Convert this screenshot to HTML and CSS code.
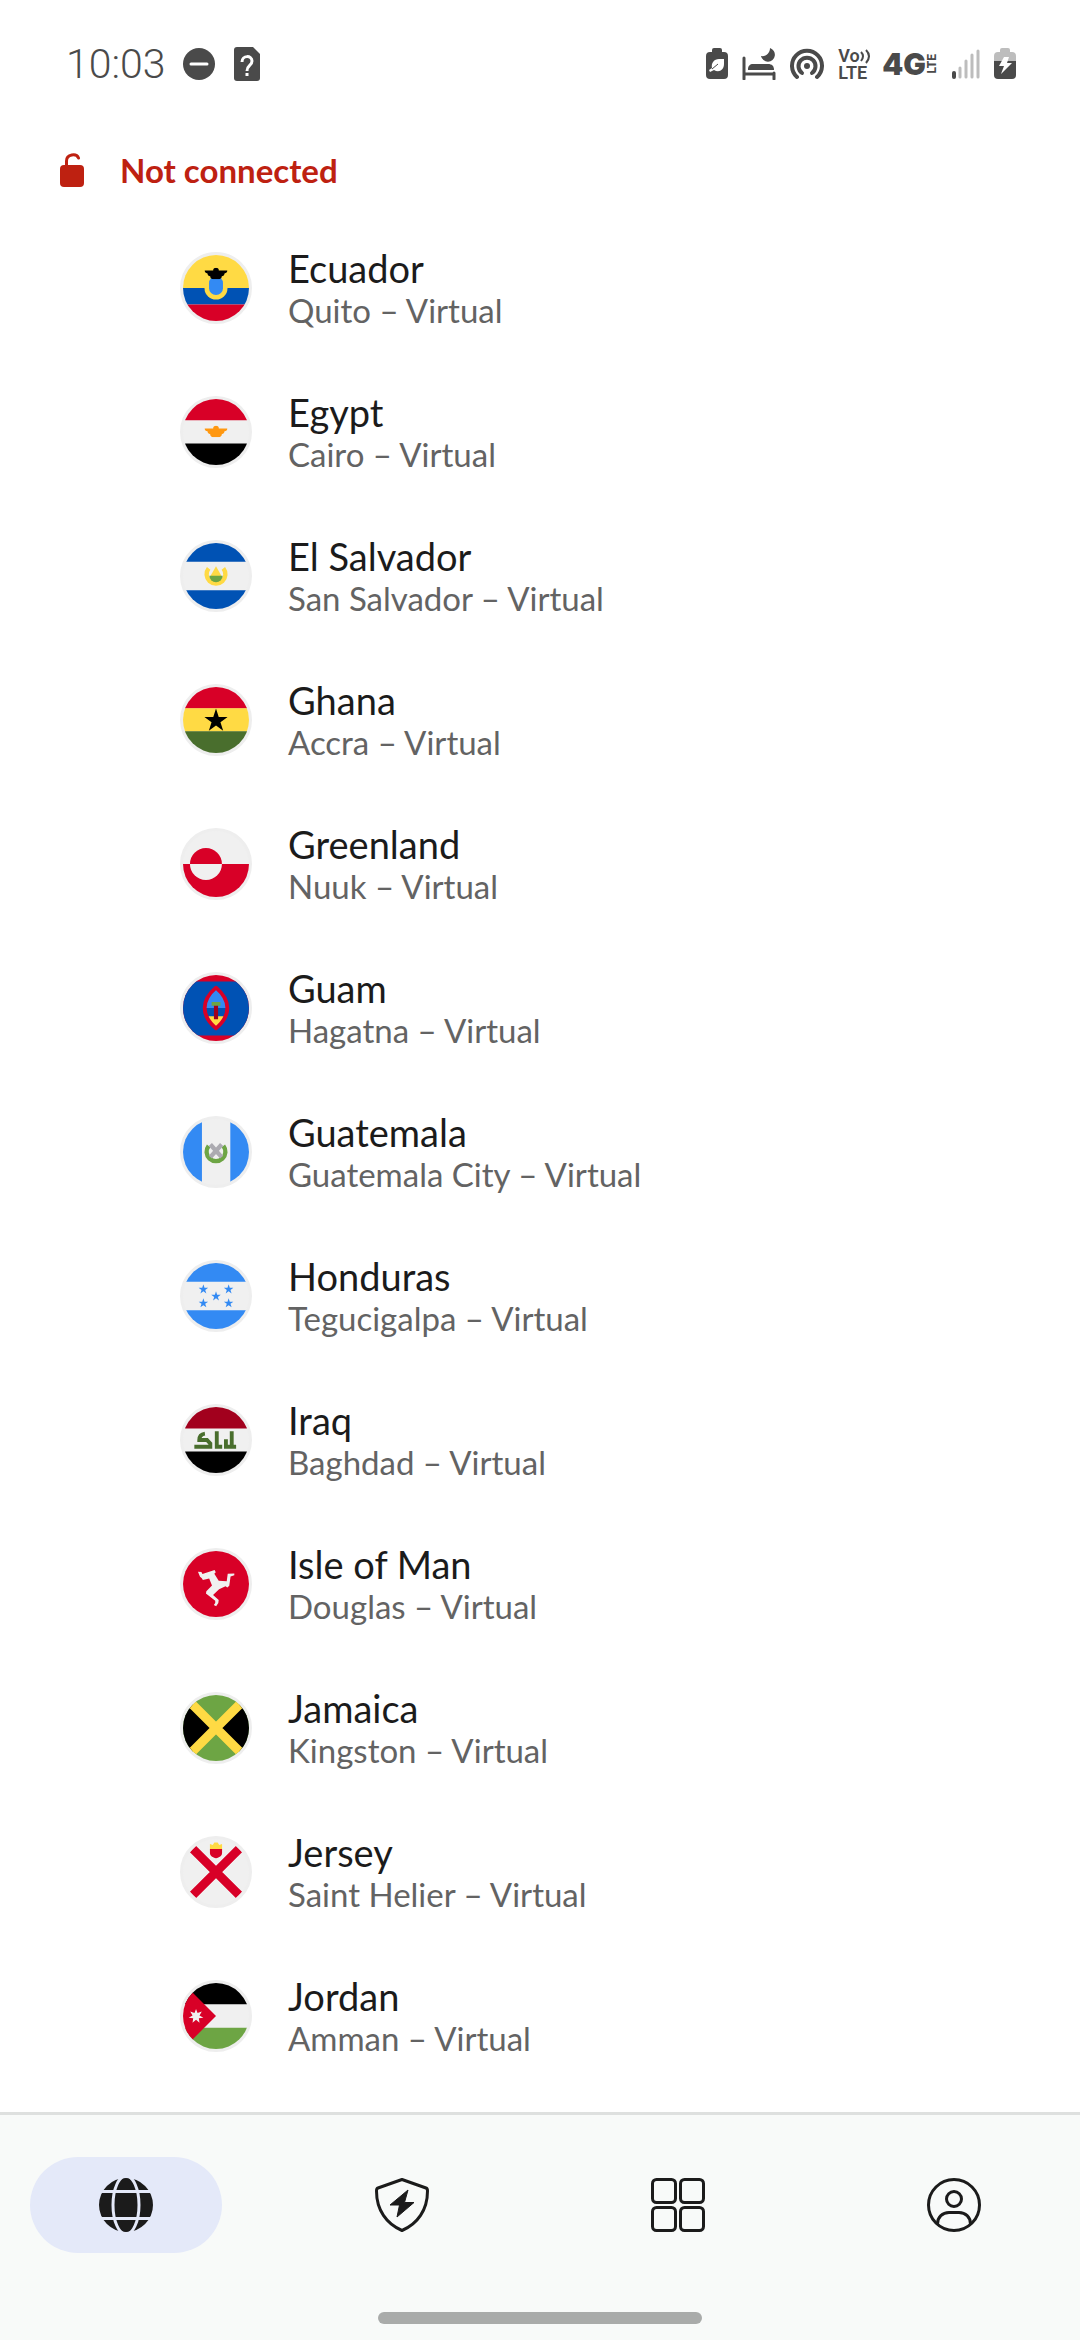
FILE: index.html
```html
<!DOCTYPE html>
<html lang="en">
<head>
    <meta charset="UTF-8">
    <meta name="viewport" content="width=device-width, initial-scale=1.0">
    <title>Countries</title>
    <link rel="stylesheet" href="styles.css">
</head>
<body>

<!-- shared shapes for the flags -->
<svg class="sprite" aria-hidden="true">
    <symbol id="star" viewBox="0 0 100 100">
        <polygon points="50,2 61.5,37.5 99,37.5 68.8,59.3 80.3,95 50,73 19.7,95 31.2,59.3 1,37.5 38.5,37.5"/>
    </symbol>
    <symbol id="eagle" viewBox="0 0 180 90">
        <path d="M179 23h-67a22 22 0 0 0-44 0H1c0 12 11 22 23 22 0 12 9 22 21 22 0 13 10 23 23 23h44c13 0 23-10 23-23 12 0 21-10 21-22 12 0 23-10 23-22z"/>
    </symbol>
</svg>

<header class="status-bar">
    <span class="clock">10:03</span>
    <svg class="icon-dnd" width="32" height="32" viewBox="0 0 32 32">
        <circle cx="16" cy="16" r="16"/>
        <path d="M8 16h16" stroke="#fff" stroke-width="3" stroke-linecap="round"/>
    </svg>
    <svg class="icon-sim" width="26" height="34" viewBox="0 0 26 34">
        <path d="M3 0h16l7 7v24a3 3 0 0 1-3 3H3a3 3 0 0 1-3-3V3a3 3 0 0 1 3-3z"/>
        <path d="M8 15c0-7 10-7 10-1 0 5-5 4-5 10" fill="none" stroke="#fff" stroke-width="3"/>
        <path d="M11.500 26h3v3h-3z" fill="#fff"/>
    </svg>

    <div class="status-icons">
        <svg width="22" height="32" viewBox="0 0 22 32">
            <path d="M8 0h6a2 2 0 0 1 2 2v2h2a4 4 0 0 1 4 4v19a4 4 0 0 1-4 4H4a4 4 0 0 1-4-4V8a4 4 0 0 1 4-4h2V2a2 2 0 0 1 2-2z"/>
            <path d="M18 11v5c0 6-5 9-10 6l-4 2-1-2 3-2c-1-5 2-9 7-9z" fill="#fff"/>
            <path d="M6 21l6-5" stroke="#4a4a4a" stroke-width="1"/>
        </svg>
        <svg width="34" height="32" viewBox="0 0 34 32">
            <path d="M2 10v21M2 26h30M32 31v-6" fill="none" stroke="#4a4a4a" stroke-width="3" stroke-linecap="round"/>
            <path d="M6 22v-1c0-3 2-5 5-5h15c4 0 6 2 6 6z"/>
            <path d="M28 0a7 7 0 1 1-9 8c5 1 9-3 9-8z"/>
        </svg>
        <svg width="34" height="32" viewBox="0 0 34 32">
            <circle cx="17" cy="18" r="3"/>
            <path d="M7 29A15 15 0 1 1 27 29" fill="none" stroke="#4a4a4a" stroke-width="4" stroke-linecap="round"/>
            <path d="M12 25A8.500 8.500 0 1 1 22 25" fill="none" stroke="#4a4a4a" stroke-width="4" stroke-linecap="round"/>
        </svg>
        <div class="volte">
            <span class="volte-top">Vo
                <svg width="11" height="16" viewBox="0 0 11 16">
                    <path d="M1 4q4 4 0 9M6 2q6 6 0 13" fill="none" stroke="#4a4a4a" stroke-width="2"/>
                </svg>
            </span>
            <span>LTE</span>
        </div>
        <div class="network">
            <span class="network-type">4G</span>
            <span class="network-lte">LTE</span>
        </div>
        <svg width="28" height="32" viewBox="0 0 28 32">
            <path d="M8 29v-9M14 29V13M20 29V7M26 29V3" stroke="#bdbdbd" stroke-width="3" stroke-linecap="round"/>
            <path d="M2 29v-4" stroke="#4a4a4a" stroke-width="4" stroke-linecap="round"/>
        </svg>
        <svg width="22" height="32" viewBox="0 0 22 32">
            <path d="M8 0h6a2 2 0 0 1 2 2v2h2a4 4 0 0 1 4 4v5H0V8a4 4 0 0 1 4-4h2V2a2 2 0 0 1 2-2z" fill="#bdbdbd"/>
            <path d="M0 13h22v14a4 4 0 0 1-4 4H4a4 4 0 0 1-4-4z"/>
            <path d="M10 9l-5 9h5l-3 8 11-11h-5l2-6z" fill="#fff"/>
        </svg>
    </div>
</header>

<div class="connection">
    <svg width="24" height="34" viewBox="0 0 24 34">
        <rect y="12" width="24" height="22" rx="4"/>
        <path d="M6.500 13V8c0-7 10-8 12-3" fill="none" stroke="#be2111" stroke-width="3" stroke-linecap="round"/>
    </svg>
    <span>Not connected</span>
</div>

<main>
    <ul class="country-list">
        <li>
            <button class="country" type="button">
                <svg class="flag" viewBox="0 0 512 512">
                    <path fill="#ffda44" d="M0 0h512v256H0z"/>
                    <path fill="#0052b4" d="M0 256h512v128H0z"/>
                    <path fill="#d80027" d="M0 384h512v128H0z"/>
                    <path fill="#ffda44" d="M167 220h178v37a89 89 0 0 1-178 0z"/>
                    <rect fill="#338af3" x="202" y="165" width="108" height="146" rx="54"/>
                    <use href="#eagle" x="166" y="98" width="180" height="90" fill="#000"/>
                </svg>
                <span class="country-text">
                    <span class="name">Ecuador</span>
                    <span class="city">Quito – Virtual</span>
                </span>
            </button>
        </li>
        <li>
            <button class="country" type="button">
                <svg class="flag" viewBox="0 0 512 512">
                    <path fill="#d80027" d="M0 0h512v165H0z"/>
                    <path fill="#000" d="M0 345h512v167H0z"/>
                    <use href="#eagle" x="166" y="206" width="180" height="90" fill="#ff9811"/>
                </svg>
                <span class="country-text">
                    <span class="name">Egypt</span>
                    <span class="city">Cairo – Virtual</span>
                </span>
            </button>
        </li>
        <li>
            <button class="country" type="button">
                <svg class="flag" viewBox="0 0 512 512">
                    <path fill="#0052b4" d="M0 0h512v145H0zM0 367h512v145H0z"/>
                    <path fill="none" stroke="#ffda44" stroke-width="34" d="M199 196a73 73 0 1 0 114 0"/>
                    <path fill="#ffda44" d="M256 180l43 76h-86z"/>
                    <path fill="#6da544" d="M204 254h104a52 50 0 0 1-104 0z"/>
                </svg>
                <span class="country-text">
                    <span class="name">El Salvador</span>
                    <span class="city">San Salvador – Virtual</span>
                </span>
            </button>
        </li>
        <li>
            <button class="country" type="button">
                <svg class="flag" viewBox="0 0 512 512">
                    <path fill="#d80027" d="M0 0h512v167H0z"/>
                    <path fill="#ffda44" d="M0 165h512v180H0z"/>
                    <path fill="#496e2d" d="M0 343h512v169H0z"/>
                    <use href="#star" x="164" y="164" width="184" height="184"/>
                </svg>
                <span class="country-text">
                    <span class="name">Ghana</span>
                    <span class="city">Accra – Virtual</span>
                </span>
            </button>
        </li>
        <li>
            <button class="country" type="button">
                <svg class="flag" viewBox="0 0 512 512">
                    <path fill="#d80027" d="M0 256h512v256H0z"/>
                    <path fill="#d80027" d="M54 256a124 124 0 0 1 248 0z"/>
                    <path fill="#f0f0f0" d="M54 256a124 124 0 0 0 248 0z"/>
                </svg>
                <span class="country-text">
                    <span class="name">Greenland</span>
                    <span class="city">Nuuk – Virtual</span>
                </span>
            </button>
        </li>
        <li>
            <button class="country" type="button">
                <svg class="flag" viewBox="0 0 512 512">
                    <path fill="#d80027" d="M0 0h512v512H0z"/>
                    <path fill="#0052b4" d="M0 50h512v420H0z"/>
                    <path fill="#338af3" d="M166 256q10-90 90-152 80 62 90 152z"/>
                    <path fill="#ffda44" d="M186 320h140q-25 60-70 92-45-32-70-92z"/>
                    <path fill="#a2001d" d="M240 230h32v114h-32z"/>
                    <path fill="#6da544" d="M222 210h68v28h-68z"/>
                    <path fill="none" stroke="#d80027" stroke-width="30" stroke-linejoin="round" d="M256 98c54 46 88 100 88 158s-34 112-88 158c-54-46-88-100-88-158s34-112 88-158z"/>
                </svg>
                <span class="country-text">
                    <span class="name">Guam</span>
                    <span class="city">Hagatna – Virtual</span>
                </span>
            </button>
        </li>
        <li>
            <button class="country" type="button">
                <svg class="flag" viewBox="0 0 512 512">
                    <path fill="#338af3" d="M0 0h147v512H0zM367 0h145v512H367z"/>
                    <path fill="none" stroke="#6da544" stroke-width="34" d="M199 208a73 73 0 1 0 114 0"/>
                    <path stroke="#acabb1" stroke-width="34" d="M212 198l88 98M300 198l-88 98"/>
                </svg>
                <span class="country-text">
                    <span class="name">Guatemala</span>
                    <span class="city">Guatemala City – Virtual</span>
                </span>
            </button>
        </li>
        <li>
            <button class="country" type="button">
                <svg class="flag" viewBox="0 0 512 512">
                    <path fill="#338af3" d="M0 0h512v145H0zM0 367h512v145H0z"/>
                    <g fill="#338af3">
                        <use href="#star" x="120" y="164" width="76" height="76"/>
                        <use href="#star" x="316" y="164" width="76" height="76"/>
                        <use href="#star" x="218" y="218" width="76" height="76"/>
                        <use href="#star" x="120" y="272" width="76" height="76"/>
                        <use href="#star" x="316" y="272" width="76" height="76"/>
                    </g>
                </svg>
                <span class="country-text">
                    <span class="name">Honduras</span>
                    <span class="city">Tegucigalpa – Virtual</span>
                </span>
            </button>
        </li>
        <li>
            <button class="country" type="button">
                <svg class="flag" viewBox="0 0 512 512">
                    <path fill="#a2001d" d="M0 0h512v167H0z"/>
                    <path fill="#000" d="M0 345h512v167H0z"/>
                    <g fill="none" stroke="#496e2d" stroke-width="30">
                        <path d="M88 308h124v-24l-26-28h-60c0-28 14-46 44-50"/>
                        <path d="M262 188v120h42"/>
                        <path d="M318 308h94M378 188v120M333 250v58"/>
                    </g>
                </svg>
                <span class="country-text">
                    <span class="name">Iraq</span>
                    <span class="city">Baghdad – Virtual</span>
                </span>
            </button>
        </li>
        <li>
            <button class="country" type="button">
                <svg class="flag" viewBox="0 0 512 512">
                    <path fill="#d80027" d="M0 0h512v512H0z"/>
                    <path fill="#f0f0f0" d="M116 160l27 2 8 16 94-31 9 18-11 11 34 54 62 5 8-59 51-2v14l-29 10-10 72-15 13-14-10-50 23-47 46 44 38-3 24-17 24-18-9 11-16v-17l-72-56 3-18 44-45-22-53-49 11-8-13-14-12z"/>
                </svg>
                <span class="country-text">
                    <span class="name">Isle of Man</span>
                    <span class="city">Douglas – Virtual</span>
                </span>
            </button>
        </li>
        <li>
            <button class="country" type="button">
                <svg class="flag" viewBox="0 0 512 512">
                    <path fill="#6da544" d="M0 0h512v512H0z"/>
                    <path fill="#000" d="M0 0l256 256L0 512zM512 0L256 256l256 256z"/>
                    <path stroke="#ffda44" stroke-width="70" d="M0 0l512 512M512 0L0 512"/>
                </svg>
                <span class="country-text">
                    <span class="name">Jamaica</span>
                    <span class="city">Kingston – Virtual</span>
                </span>
            </button>
        </li>
        <li>
            <button class="country" type="button">
                <svg class="flag" viewBox="0 0 512 512">
                    <path stroke="#d80027" stroke-width="68" d="M78 78l356 356M434 78L78 434"/>
                    <path fill="#ffda44" d="M209 38l22 8 12-18h26l12 18 22-8v48h-94z"/>
                    <path fill="#d80027" d="M209 78h94v28c0 26-22 37-47 43-25-6-47-17-47-43z"/>
                </svg>
                <span class="country-text">
                    <span class="name">Jersey</span>
                    <span class="city">Saint Helier – Virtual</span>
                </span>
            </button>
        </li>
        <li>
            <button class="country" type="button">
                <svg class="flag" viewBox="0 0 512 512">
                    <path fill="#000" d="M0 0h512v165H0z"/>
                    <path fill="#6da544" d="M0 347h512v165H0z"/>
                    <path fill="#d80027" d="M0 0l256 256L0 512z"/>
                    <path fill="#f0f0f0" d="M101 201l12 32 33-11-18 30 30 18-35 4 5 35-27-24-27 24 5-35-35-4 30-18-18-30 33 11z"/>
                </svg>
                <span class="country-text">
                    <span class="name">Jordan</span>
                    <span class="city">Amman – Virtual</span>
                </span>
            </button>
        </li>
    </ul>
</main>

<footer class="bottom">
    <nav class="tabs">
        <a class="tab active" href="#countries" aria-label="Countries">
            <svg width="54" height="54" viewBox="0 0 54 54">
                <circle cx="27" cy="27" r="27" fill="#1b1b1b"/>
                <g fill="none" stroke="#e4e9f9" stroke-width="3">
                    <ellipse cx="27" cy="27" rx="13" ry="29"/>
                    <path d="M0 13.500h54M0 40.500h54"/>
                </g>
            </svg>
        </a>
        <a class="tab" href="#protection" aria-label="Protection">
            <svg width="54" height="54" viewBox="0 0 54 54">
                <path d="M27 1.500L51 10q1.500.500 1.500 3c0 19-10 33-25.500 39.500C11.500 46 1.500 32 1.500 13q0-2.500 1.500-3z" fill="none" stroke="#1b1b1b" stroke-width="3" stroke-linejoin="round"/>
                <path d="M33 12l-3.500 12.500H39L22 39l2.500-12H15z" fill="#1b1b1b" stroke="#1b1b1b" stroke-linejoin="round"/>
            </svg>
        </a>
        <a class="tab" href="#products" aria-label="Products">
            <svg width="54" height="54" viewBox="0 0 54 54" fill="none" stroke="#1b1b1b" stroke-width="3">
                <rect x="1.500" y="1.500" width="23" height="23" rx="4"/>
                <rect x="29.500" y="1.500" width="23" height="23" rx="4"/>
                <rect x="1.500" y="29.500" width="23" height="23" rx="4"/>
                <rect x="29.500" y="29.500" width="23" height="23" rx="4"/>
            </svg>
        </a>
        <a class="tab" href="#profile" aria-label="Profile">
            <svg width="54" height="54" viewBox="0 0 54 54" fill="none" stroke="#1b1b1b" stroke-width="3">
                <circle cx="27" cy="27" r="25.500"/>
                <circle cx="27" cy="21" r="7.500"/>
                <path d="M10.500 46c0-7 5-11.500 11.500-11.500h10c6.500 0 11.500 4.500 11.500 11.500"/>
            </svg>
        </a>
    </nav>
    <div class="home-indicator"></div>
</footer>

</body>
</html>
```

FILE: styles.css
```css
* {
    box-sizing: border-box;
}

body {
    display: flex;
    flex-direction: column;
    min-height: 100vh;
    margin: 0;
    background-color: #fff;
    font-family: Lato, sans-serif;
    color: #1b1b1b;
}

svg {
    display: block;
    flex-shrink: 0;
}

.sprite {
    position: absolute;
    width: 0;
    height: 0;
}

/* Status bar */
.status-bar {
    display: flex;
    align-items: center;
    height: 128px;
    padding: 0 64px 0 66px;
    color: #4a4a4a;
    fill: #4a4a4a;
}

.clock {
    font-family: Roboto, sans-serif;
    font-size: 41px;
    font-weight: 300;
}

.icon-dnd {
    margin-left: 17px;
}

.icon-sim {
    margin-left: 19px;
}

.status-icons {
    display: flex;
    align-items: center;
    gap: 14px;
    margin-left: auto;
}

.volte {
    display: flex;
    flex-direction: column;
    width: 30px;
    font-family: Roboto, sans-serif;
    font-size: 18px;
    font-weight: 600;
    line-height: 17px;
}

.volte-top {
    display: flex;
    align-items: center;
}

.network {
    display: flex;
    align-items: center;
    font-weight: 800;
    line-height: 32px;
}

.network-type {
    font-family: Inter, sans-serif;
    font-size: 30px;
    font-weight: 900;
}

.network-lte {
    font-family: Roboto, sans-serif;
    font-size: 12px;
    line-height: 12px;
    writing-mode: vertical-rl;
    transform: rotate(180deg);
}

/* Connection state */
.connection {
    display: flex;
    align-items: center;
    gap: 36px;
    height: 88px;
    padding: 0 60px 4px;
    font-size: 33px;
    font-weight: 700;
    color: #be2111;
    fill: #be2111;
}

/* Country list */
.country-list {
    margin: 0;
    padding: 0 0 24px;
    list-style: none;
}

.country {
    display: flex;
    align-items: center;
    gap: 36px;
    width: 100%;
    height: 144px;
    padding: 0 48px 0 180px;
    border: none;
    background: none;
    font-family: inherit;
    text-align: left;
    color: inherit;
    cursor: pointer;
}

.flag {
    width: 72px;
    height: 72px;
    border: 3px solid #eee;
    border-radius: 50%;
    background-color: #f0f0f0;
}

.country-text {
    display: flex;
    flex-direction: column;
    padding-top: 2px;
    line-height: 42px;
}

.name {
    font-size: 38px;
}

.city {
    font-size: 33px;
    color: #636363;
}

/* Bottom navigation */
.bottom {
    margin-top: auto;
    padding: 42px 30px 16px;
    border-top: 3px solid #dee0df;
    background-color: #f8faf9;
}

.tabs {
    display: flex;
    justify-content: space-between;
}

.tab {
    display: flex;
    align-items: center;
    justify-content: center;
    width: 192px;
    height: 96px;
    border-radius: 48px;
}

.tab.active {
    background-color: #e4e9f9;
}

.home-indicator {
    width: 324px;
    height: 12px;
    margin: 59px auto 0;
    border-radius: 6px;
    background-color: #a9abaa;
}
```
